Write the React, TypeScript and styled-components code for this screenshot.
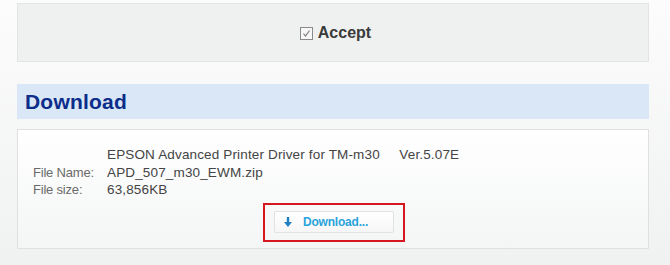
import React from "react";
import styled, { createGlobalStyle } from "styled-components";

const GlobalStyle = createGlobalStyle`
  *, *::before, *::after {
    box-sizing: border-box;
  }
  html, body {
    margin: 0;
    padding: 0;
  }
  body {
    font-family: "Liberation Sans", Arial, sans-serif;
    background: linear-gradient(#fcfcfc, #f0f1f1);
    min-height: 265px;
  }
`;

const Page = styled.div`
  width: 670px;
  padding: 3px 21px 0 17px;
  display: flex;
  flex-direction: column;
`;

const AcceptBox = styled.div`
  height: 59px;
  background: #eff0f0;
  border: 1px solid #e3e4e4;
  display: flex;
  align-items: center;
  justify-content: center;
  gap: 5px;
  padding-left: 5px;
`;

const CheckBox = styled.span`
  flex: 0 0 13px;
  width: 13px;
  height: 13px;
  border: 1px solid #8a8a8a;
  background: #f7f7f7;
  display: flex;
  align-items: center;
  justify-content: center;
  margin-top: 1px;
`;

const AcceptLabel = styled.span`
  font-size: 16px;
  font-weight: bold;
  color: #3a3a3a;
`;

const SectionHeader = styled.h2`
  margin: 22px 0 0;
  height: 35px;
  background: #d9e7f6;
  color: #0c2d8a;
  font-size: 21px;
  font-weight: bold;
  letter-spacing: 0.2px;
  line-height: 35px;
  padding-left: 8px;
`;

const FileBox = styled.div`
  margin-top: 10px;
  height: 120px;
  border: 1px solid #e0e0e0;
  background: linear-gradient(#ffffff, #f4f5f5);
  padding: 16px 15px 0;
  display: flex;
  flex-direction: column;
`;

const InfoRow = styled.div`
  display: grid;
  grid-template-columns: 74px auto;
  align-items: baseline;
  line-height: 17.5px;
`;

const Label = styled.span`
  font-size: 13px;
  letter-spacing: -0.2px;
  color: #6a6a6a;
`;

const Value = styled.span`
  font-size: 13.5px;
  letter-spacing: 0.15px;
  color: #444;
  white-space: pre;
`;

const Highlight = styled.div`
  align-self: center;
  margin-top: 4px;
  margin-left: 2px;
  width: 142px;
  height: 39px;
  border: 2px solid #d7171f;
  display: flex;
  align-items: center;
  justify-content: center;
`;

const DownloadButton = styled.button`
  width: 120px;
  height: 22px;
  background: linear-gradient(#ffffff, #f6f6f6);
  border: 1px solid #e2e2e2;
  border-radius: 2px;
  display: flex;
  align-items: center;
  gap: 11px;
  padding: 0 0 0 9px;
  font-family: "Liberation Sans", Arial, sans-serif;
  font-size: 12px;
  font-weight: bold;
  color: #2aa3db;
  letter-spacing: -0.2px;
  cursor: pointer;
`;

const ArrowDown = () => (
  <svg width="8" height="10" viewBox="0 0 8 10">
    <rect x="2.8" y="0" width="2.4" height="6" fill="#1f7fc0" />
    <polygon points="0,5 8,5 4,10" fill="#1f7fc0" />
  </svg>
);

const CheckMark = () => (
  <svg width="9" height="9" viewBox="0 0 9 9">
    <polyline points="1.5,4.5 3.5,7 7.5,1.5" fill="none" stroke="#777" strokeWidth="1.1" />
  </svg>
);

export default function App() {
  return (
    <>
      <GlobalStyle />
      <Page>
        <AcceptBox>
          <CheckBox>
            <CheckMark />
          </CheckBox>
          <AcceptLabel>Accept</AcceptLabel>
        </AcceptBox>
        <SectionHeader>Download</SectionHeader>
        <FileBox>
          <InfoRow>
            <Label />
            <Value>EPSON Advanced Printer Driver for TM-m30     Ver.5.07E</Value>
          </InfoRow>
          <InfoRow>
            <Label>File Name:</Label>
            <Value>APD_507_m30_EWM.zip</Value>
          </InfoRow>
          <InfoRow>
            <Label>File size:</Label>
            <Value>63,856KB</Value>
          </InfoRow>
          <Highlight>
            <DownloadButton>
              <ArrowDown />
              Download...
            </DownloadButton>
          </Highlight>
        </FileBox>
      </Page>
    </>
  );
}
